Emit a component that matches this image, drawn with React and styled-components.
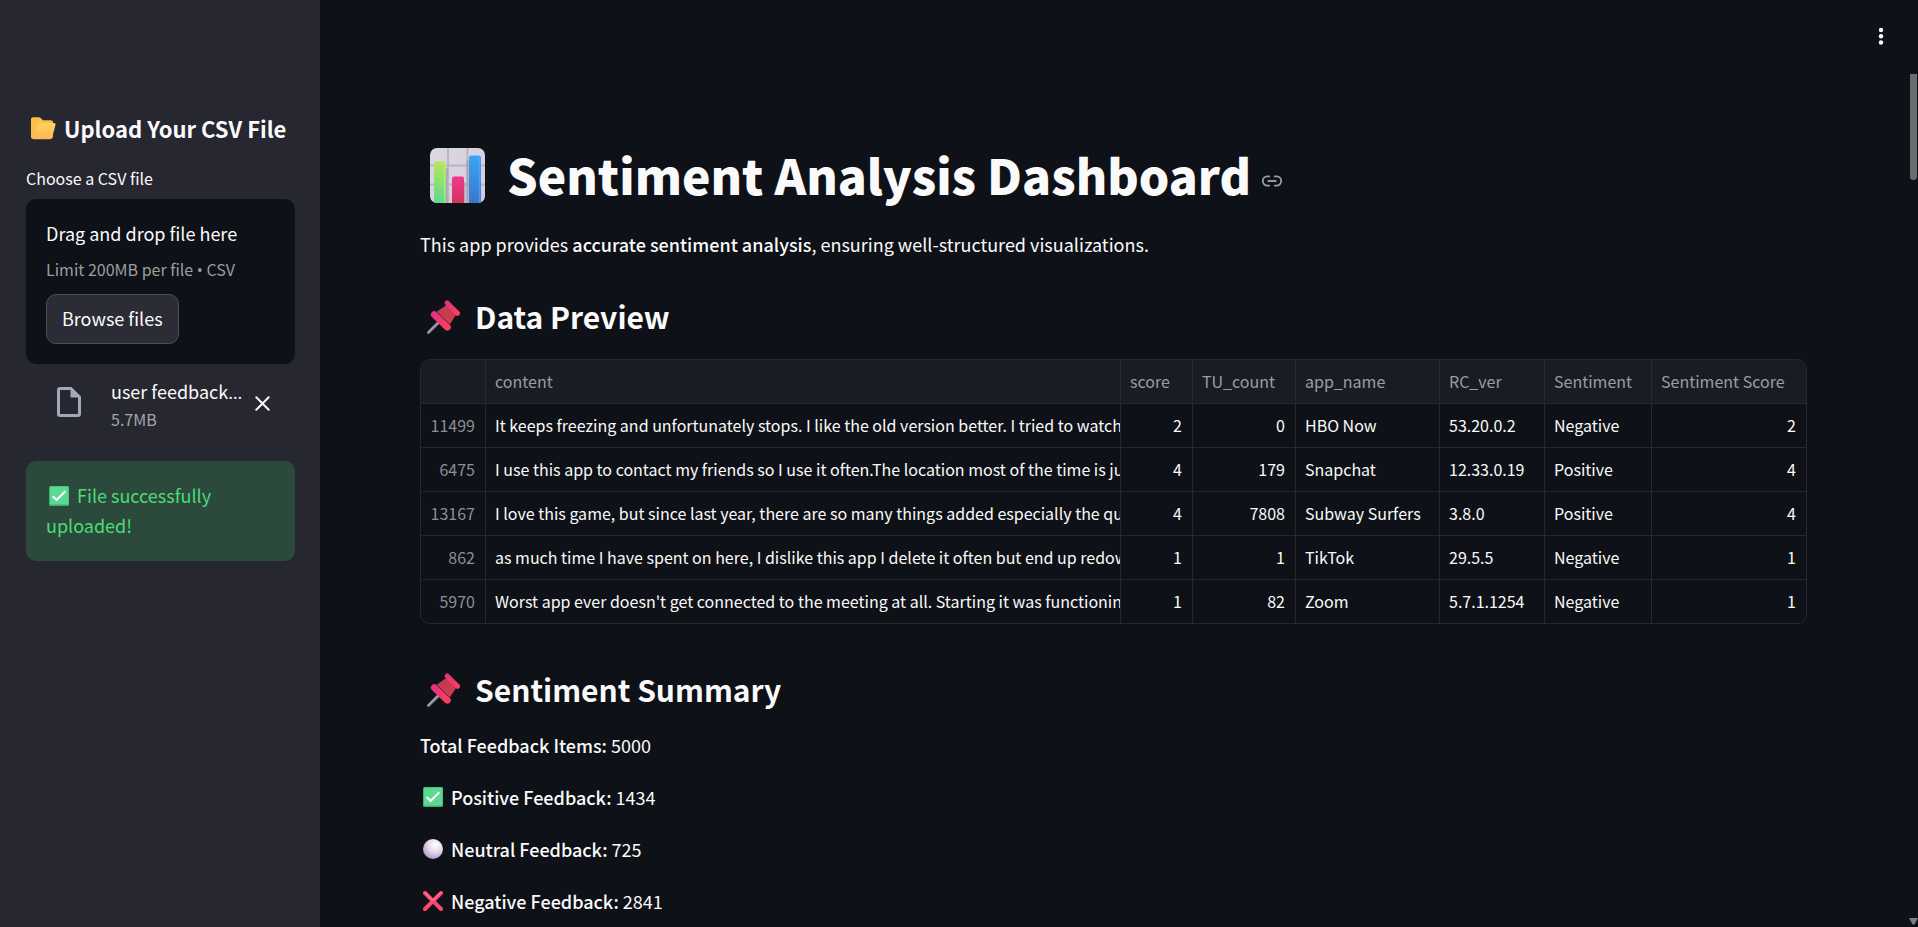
import React from "react";
import styled, { createGlobalStyle } from "styled-components";
import { Link2 } from "lucide-react";

const GlobalStyle = createGlobalStyle`
  *, *::before, *::after { box-sizing: border-box; }
  body {
    margin: 0;
    background: #0e1117;
    color: #fafafa;
    font-family: "Noto Sans CJK SC", "Noto Sans", sans-serif;
    font-size: 18px;
    line-height: 30px;
  }
`;

const Page = styled.div`
  display: flex;
  min-height: 100vh;
`;

const Sidebar = styled.aside`
  flex: 0 0 320px;
  min-width: 0;
  padding: 112px 25px 0 26px;
  background: #262730;
`;

const SidebarTitle = styled.h2`
  display: flex;
  align-items: center;
  gap: 8px;
  margin: 0 0 19px;
  padding-left: 4px;
  font-size: 22px;
  line-height: 32px;
  font-weight: 600;
  white-space: nowrap;
`;

const FieldLabel = styled.label`
  display: block;
  margin-bottom: 6px;
  font-size: 16px;
  line-height: 30px;
`;

const Dropzone = styled.section`
  padding: 19px 20px 20px;
  border-radius: 10px;
  background: #0e1117;
`;

const DropText = styled.div`
  line-height: 30px;
`;

const Muted = styled.div`
  font-size: 16px;
  line-height: ${(p) => p.$line || 24}px;
  color: ${(p) => (p.$dark ? "#9c9da0" : "#a5a5a9")};
`;

const Punct = styled.span`
  font-family: "Open Sans", sans-serif;
`;

const BrowseButton = styled.button`
  display: block;
  height: 50px;
  margin-top: 3px;
  padding: 0 15px 2px;
  border: 1px solid #4c4d56;
  border-radius: 10px;
  background: #2b2c36;
  color: inherit;
  font: inherit;
`;

const HiddenFile = styled.input`
  display: none;
`;

const FileRow = styled.div`
  display: flex;
  align-items: center;
  padding: 12px 25px 0 31px;

  > svg { margin-bottom: 4px; }
`;

const FileInfo = styled.div`
  flex: 1;
  min-width: 0;
  margin-left: 30px;
`;

const FileName = styled.div`
  overflow: hidden;
  line-height: 30px;
  white-space: nowrap;
`;

const IconButton = styled.button`
  display: flex;
  padding: 0;
  border: 0;
  background: none;
  color: #fafafa;
`;

const Alert = styled.div`
  margin-top: 30px;
  padding: 19px 20px 21px;
  border-radius: 10px;
  background: #2b4a3c;
  color: #4bdc78;

  svg { margin: 0 8px 0 3px; vertical-align: -3px; }
`;

const Main = styled.main`
  flex: 1;
  min-width: 0;
  padding: 0 100px;
`;

const Toolbar = styled.header`
  display: flex;
  justify-content: flex-end;
  height: 75px;
  padding-top: 24px;
  margin-right: -86px;
`;

const Title = styled.h1`
  display: flex;
  align-items: center;
  gap: 22px;
  margin: 64px 0 0;
  padding-left: 10px;
  font-size: 48px;
  line-height: 70px;
  font-weight: 900;
  white-space: nowrap;

  > svg { margin-top: 2px; }
`;

const Anchor = styled.a`
  display: flex;
  margin: 13px 0 0 -12px;
  color: #9c9da0;
`;

const Intro = styled.p`
  margin: 20px 0 0;
`;

const SectionTitle = styled.h2`
  display: flex;
  align-items: center;
  gap: 14px;
  margin: ${(p) => p.$top}px 0 0;
  padding-left: 6px;
  font-size: 30px;
  line-height: 44px;
  font-weight: 600;

  > svg { margin-top: 2px; }
`;

const Strong = styled.strong`
  font-weight: 500;
`;

const TableFrame = styled.div`
  margin-top: 21px;
  overflow: hidden;
  border: 1px solid #26282d;
  border-radius: 10px;
`;

const Table = styled.table`
  width: 100%;
  table-layout: fixed;
  border-collapse: separate;
  border-spacing: 0;
  font-size: 16px;
  line-height: 22px;

  th, td {
    height: 44px;
    padding: 0 10px 2px 9px;
    overflow: hidden;
    border-right: 1px solid #26282d;
    border-bottom: 1px solid #26282d;
    white-space: nowrap;
  }
  thead th { background: #1a1c24; }
  tr > :last-child { border-right: 0; }
  tbody tr:last-child > * { height: 43px; border-bottom: 0; }
`;

const HeadCell = styled.th`
  width: ${(p) => (p.$width ? p.$width + "px" : "auto")};
  color: #9c9da0;
  font-weight: 400;
  text-align: left;
`;

const IndexCell = styled.th`
  color: #8c8e92;
  font-weight: 400;
  text-align: right;
`;

const Cell = styled.td`
  text-align: ${(p) => (p.$number ? "right" : "left")};
`;

const Stats = styled.div`
  display: grid;
  gap: 22px;
  margin-top: 19px;
`;

const Stat = styled.p`
  display: flex;
  align-items: center;
  gap: 4px;
  margin: 0;

  svg { margin: 0 4px 0 3px; }
`;

const Scrollbar = styled.div`
  display: flex;
  flex: 0 0 11px;
  flex-direction: column;
  align-items: center;
  justify-content: space-between;
  padding: 74px 0 2px 2px;
`;

const Thumb = styled.div`
  width: 7px;
  height: 106px;
  border-radius: 0 0 4px 4px;
  background: #6b6c70;
`;

const FolderIcon = () => (
  <svg width="26" height="23" viewBox="0 0 26 23" aria-hidden="true">
    <defs>
      <linearGradient id="folder" x1="0" y1="0" x2="0" y2="1">
        <stop offset="0" stopColor="#ffd45a" />
        <stop offset="1" stopColor="#fdb45c" />
      </linearGradient>
    </defs>
    <path d="M1 2.5Q1 .5 3 .5H9Q10.200 .5 11 1.500L13 3.500H21Q23 3.500 23 5.500V19Q23 22 20 22H3Q1 22 1 20Z" fill="#f2a83a" />
    <path d="M1 2.5Q1 .5 3 .5H9Q10.200 .5 11 1.500L13 3.500H21Q23 3.500 23 5.500V6H8L2 21Q1 21 1 20Z" fill="#fbbf45" />
    <path d="M7.500 7.500Q8 6 9.500 6H24Q26 6 25.500 8L22.300 20Q21.700 22.300 19.500 22.300H3.500Q1.700 22.300 2.300 20.300Z" fill="url(#folder)" />
  </svg>
);

const DocIcon = () => (
  <svg width="24" height="30" viewBox="0 0 24 30" aria-hidden="true">
    <path fillRule="evenodd" fill="#a3a8b8" d="M3 0H14.500L24 9.500V27Q24 30 21 30H3Q0 30 0 27V3Q0 0 3 0ZM3 3V27H21V10.500H13.500V3Z" />
  </svg>
);

const CloseIcon = () => (
  <svg width="15" height="15" viewBox="0 0 15 15" aria-hidden="true">
    <path d="M1.300 1.300L13.700 13.700M13.700 1.300L1.300 13.700" stroke="currentColor" strokeWidth="2" strokeLinecap="round" />
  </svg>
);

const KebabIcon = () => (
  <svg width="24" height="24" viewBox="0 0 24 24" aria-hidden="true">
    <g fill="#fafafa">
      <circle cx="12" cy="6" r="2.200" />
      <circle cx="12" cy="12.300" r="2.200" />
      <circle cx="12" cy="18.500" r="2.200" />
    </g>
  </svg>
);

const CheckIcon = () => (
  <svg width="20" height="20" viewBox="0 0 20 20" aria-hidden="true">
    <rect width="20" height="20" rx="1.500" fill="#3fae74" />
    <rect x="1" y="0.500" width="18.500" height="18" rx="1" fill="#5bd892" />
    <path d="M4.200 10.600L7.600 14L15.800 5.800" fill="none" stroke="#fff" strokeWidth="2" strokeLinecap="round" strokeLinejoin="round" />
  </svg>
);

const NeutralIcon = () => (
  <svg width="20" height="20" viewBox="0 0 20 20" aria-hidden="true">
    <defs>
      <radialGradient id="ball" cx="0.62" cy="0.3" r="0.75">
        <stop offset="0" stopColor="#ffffff" />
        <stop offset="0.5" stopColor="#e2d8ea" />
        <stop offset="1" stopColor="#b094cc" />
      </radialGradient>
    </defs>
    <circle cx="10" cy="10" r="10" fill="url(#ball)" />
  </svg>
);

const CrossIcon = () => (
  <svg width="20" height="20" viewBox="0 0 20 20" aria-hidden="true">
    <path d="M2 2L18 18M18 2L2 18" stroke="#f8486f" strokeWidth="4" strokeLinecap="round" />
    <path d="M2 1.600L10 9.500L18 1.600" fill="none" stroke="#ff6a8e" strokeWidth="1.500" strokeLinecap="round" />
  </svg>
);

const ChartIcon = () => (
  <svg width="55" height="55" viewBox="0 0 55 55" aria-hidden="true">
    <defs>
      <clipPath id="card"><rect width="55" height="55" rx="7" /></clipPath>
      <linearGradient id="green" x1="0" y1="0" x2="0" y2="1">
        <stop offset="0" stopColor="#b7e65b" /><stop offset="1" stopColor="#5fd990" />
      </linearGradient>
      <linearGradient id="pink" x1="0" y1="0" x2="0" y2="1">
        <stop offset="0" stopColor="#f0368f" /><stop offset="1" stopColor="#d2365c" />
      </linearGradient>
      <linearGradient id="blue" x1="0" y1="0" x2="0" y2="1">
        <stop offset="0" stopColor="#37a6f5" /><stop offset="1" stopColor="#3b76cc" />
      </linearGradient>
      <linearGradient id="paper" x1="0" y1="0" x2="1" y2="1">
        <stop offset="0" stopColor="#dcd8e0" /><stop offset="1" stopColor="#d5cbe2" />
      </linearGradient>
    </defs>
    <g clipPath="url(#card)">
      <rect width="55" height="55" fill="url(#paper)" />
      <path d="M18 0V55M37.500 0V55M0 17.500H55M0 36.500H55" stroke="#b9b4bf" strokeWidth="2" />
      <path d="M16.500 20V55M34.500 34V55M37.500 12V55" stroke="#9c8fae" strokeWidth="2" opacity="0.6" />
      <path d="M4 55V15.500Q4 13.500 6 13.500H14Q16 13.500 16 15.500V55Z" fill="url(#green)" />
      <path d="M22 55V30.500Q22 28.500 24 28.500H32Q34 28.500 34 30.500V55Z" fill="url(#pink)" />
      <path d="M39 55V9.500Q39 7.500 41 7.500H49Q51 7.500 51 9.500V55Z" fill="url(#blue)" />
      <path d="M14.500 15V55" stroke="#c9f26c" strokeWidth="1.500" opacity="0.6" />
      <path d="M49.500 9V55" stroke="#5ab8f8" strokeWidth="1.500" opacity="0.5" />
    </g>
  </svg>
);

const PinIcon = () => (
  <svg width="35" height="35" viewBox="0 0 36 36" aria-hidden="true">
    <defs>
      <linearGradient id="pinHead" x1="0" y1="0" x2="1" y2="1">
        <stop offset="0" stopColor="#e8327f" /><stop offset="1" stopColor="#fb3f5c" />
      </linearGradient>
      <linearGradient id="pinBody" x1="0" y1="0" x2="1" y2="1">
        <stop offset="0" stopColor="#b93a52" /><stop offset="1" stopColor="#d83a52" />
      </linearGradient>
    </defs>
    <path d="M2.500 33.500L13 23" stroke="#8f8795" strokeWidth="3" strokeLinecap="round" />
    <path d="M2.500 33L12.500 23" stroke="#b9b1be" strokeWidth="1" strokeLinecap="round" />
    <path d="M11 12L21.500 4.500L31.500 14.500L24.500 25Z" fill="url(#pinBody)" />
    <path d="M21.800 3L32.500 13.700" stroke="url(#pinHead)" strokeWidth="5" strokeLinecap="round" />
    <path d="M8.500 15L22 28" stroke="url(#pinHead)" strokeWidth="7" strokeLinecap="round" />
  </svg>
);

const ScrollArrow = () => (
  <svg width="9" height="7" viewBox="0 0 9 7" aria-hidden="true">
    <path d="M0 0H9L5.500 6.500H3.500Z" fill="#7d7e82" />
  </svg>
);

const columns = [
  { name: "", width: 65 },
  { name: "content" },
  { name: "score", width: 72 },
  { name: "TU_count", width: 103 },
  { name: "app_name", width: 144 },
  { name: "RC_ver", width: 105 },
  { name: "Sentiment", width: 107 },
  { name: "Sentiment Score", width: 154 },
];

const rows = [
  [11499, "It keeps freezing and unfortunately stops. I like the old version better. I tried to watch it", 2, 0, "HBO Now", "53.20.0.2", "Negative", 2],
  [6475, "I use this app to contact my friends so I use it often.The location most of the time is just", 4, 179, "Snapchat", "12.33.0.19", "Positive", 4],
  [13167, "I love this game, but since last year, there are so many things added especially the ques", 4, 7808, "Subway Surfers", "3.8.0", "Positive", 4],
  [862, "as much time I have spent on here, I dislike this app I delete it often but end up redown", 1, 1, "TikTok", "29.5.5", "Negative", 1],
  [5970, "Worst app ever doesn't get connected to the meeting at all. Starting it was functioning", 1, 82, "Zoom", "5.7.1.1254", "Negative", 1],
];

const stats = [
  { label: "Positive Feedback:", value: 1434, Icon: CheckIcon },
  { label: "Neutral Feedback:", value: 725, Icon: NeutralIcon },
  { label: "Negative Feedback:", value: 2841, Icon: CrossIcon },
];

export default function App() {
  return (
    <>
      <GlobalStyle />
      <Page>
        <Sidebar>
          <SidebarTitle><FolderIcon />Upload Your CSV File</SidebarTitle>
          <FieldLabel htmlFor="csv">Choose a CSV file</FieldLabel>
          <Dropzone>
            <DropText>Drag and drop file here</DropText>
            <Muted $dark $line={42}>Limit 200MB per file <Punct>•</Punct> CSV</Muted>
            <HiddenFile id="csv" type="file" accept=".csv" />
            <BrowseButton type="button">Browse files</BrowseButton>
          </Dropzone>
          <FileRow>
            <DocIcon />
            <FileInfo>
              <FileName>user feedback<Punct>…</Punct></FileName>
              <Muted>5.7MB</Muted>
            </FileInfo>
            <IconButton type="button" aria-label="Remove file"><CloseIcon /></IconButton>
          </FileRow>
          <Alert role="status"><CheckIcon />File successfully uploaded!</Alert>
        </Sidebar>
        <Main>
          <Toolbar>
            <IconButton type="button" aria-label="Main menu"><KebabIcon /></IconButton>
          </Toolbar>
          <Title>
            <ChartIcon />
            Sentiment Analysis Dashboard
            <Anchor href="#dashboard" aria-label="Link to heading"><Link2 size={22} strokeWidth={2} /></Anchor>
          </Title>
          <Intro>
            This app provides <Strong>accurate sentiment analysis</Strong>, ensuring well-structured visualizations.
          </Intro>
          <SectionTitle $top={35}><PinIcon />Data Preview</SectionTitle>
          <TableFrame>
            <Table>
              <thead>
                <tr>
                  {columns.map((c) => (
                    <HeadCell key={c.name} scope="col" $width={c.width}>{c.name}</HeadCell>
                  ))}
                </tr>
              </thead>
              <tbody>
                {rows.map(([index, ...cells]) => (
                  <tr key={index}>
                    <IndexCell scope="row">{index}</IndexCell>
                    {cells.map((value, i) => (
                      <Cell key={i} $number={typeof value === "number"}>{value}</Cell>
                    ))}
                  </tr>
                ))}
              </tbody>
            </Table>
          </TableFrame>
          <SectionTitle $top={43}><PinIcon />Sentiment Summary</SectionTitle>
          <Stats>
            <Stat><Strong>Total Feedback Items:</Strong>5000</Stat>
            {stats.map(({ label, value, Icon }) => (
              <Stat key={label}><Icon /><Strong>{label}</Strong>{value}</Stat>
            ))}
          </Stats>
        </Main>
        <Scrollbar aria-hidden="true"><Thumb /><ScrollArrow /></Scrollbar>
      </Page>
    </>
  );
}
